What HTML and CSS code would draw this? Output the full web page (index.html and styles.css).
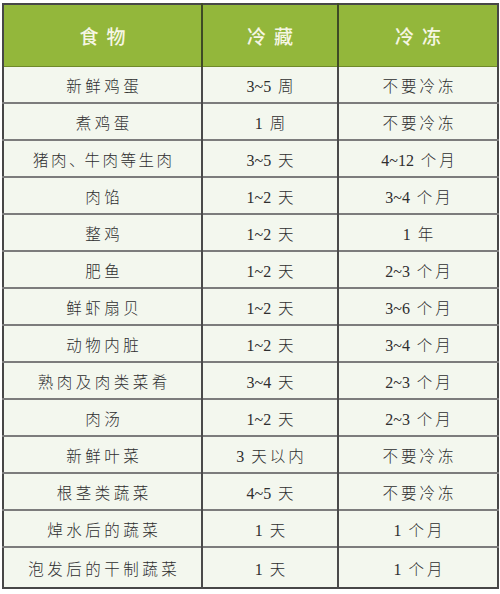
FILE: index.html
```html
<!DOCTYPE html>
<html lang="zh">
<head>
<meta charset="utf-8">
<link rel="stylesheet" href="styles.css">
</head>
<body>
<table class="food-table">
  <colgroup>
    <col class="c1"><col class="c2"><col class="c3">
  </colgroup>
  <thead>
    <tr><th>食物</th><th>冷藏</th><th>冷冻</th></tr>
  </thead>
  <tbody>
    <tr><td>新鲜鸡蛋</td><td><span class="n">3~5</span> 周</td><td>不要冷冻</td></tr>
    <tr><td>煮鸡蛋</td><td><span class="n">1</span> 周</td><td>不要冷冻</td></tr>
    <tr><td class="tight">猪肉<span class="dun">、</span>牛肉等生肉</td><td><span class="n">3~5</span> 天</td><td><span class="n">4~12</span> 个月</td></tr>
    <tr><td>肉馅</td><td><span class="n">1~2</span> 天</td><td><span class="n">3~4</span> 个月</td></tr>
    <tr><td>整鸡</td><td><span class="n">1~2</span> 天</td><td><span class="n">1</span> 年</td></tr>
    <tr><td>肥鱼</td><td><span class="n">1~2</span> 天</td><td><span class="n">2~3</span> 个月</td></tr>
    <tr><td>鲜虾扇贝</td><td><span class="n">1~2</span> 天</td><td><span class="n">3~6</span> 个月</td></tr>
    <tr><td>动物内脏</td><td><span class="n">1~2</span> 天</td><td><span class="n">3~4</span> 个月</td></tr>
    <tr><td>熟肉及肉类菜肴</td><td><span class="n">3~4</span> 天</td><td><span class="n">2~3</span> 个月</td></tr>
    <tr><td>肉汤</td><td><span class="n">1~2</span> 天</td><td><span class="n">2~3</span> 个月</td></tr>
    <tr><td>新鲜叶菜</td><td><span class="n">3</span> 天以内</td><td>不要冷冻</td></tr>
    <tr><td>根茎类蔬菜</td><td><span class="n">4~5</span> 天</td><td>不要冷冻</td></tr>
    <tr><td>焯水后的蔬菜</td><td><span class="n">1</span> 天</td><td><span class="n">1</span> 个月</td></tr>
    <tr class="last"><td>泡发后的干制蔬菜</td><td><span class="n">1</span> 天</td><td><span class="n">1</span> 个月</td></tr>
  </tbody>
</table>
</body>
</html>
```

FILE: styles.css
```css
html, body {
  margin: 0;
  padding: 0;
  background: #ffffff;
}

.food-table {
  margin: 3px 0 0 2px;
  width: 495px;
  border-collapse: collapse;
  table-layout: fixed;
  border: 2px solid #474747;
  background: #f3f7ee;
  font-family: "Liberation Serif", "Noto Sans CJK SC", serif;
}

.c1 { width: 199px; }
.c2 { width: 136px; }
.c3 { width: 160px; }

.food-table th {
  height: 61px;
  padding: 0;
  background: #93b73b;
  color: #f6f6e4;
  font-family: "Noto Sans CJK SC", sans-serif;
  font-size: 19px;
  font-weight: 500;
  letter-spacing: 8px;
  text-indent: 8px;
  text-align: center;
  vertical-align: middle;
  border-left: 2px solid #3f4a25;
  border-bottom: 1px solid #6f8a2a;
}

.food-table th:first-child { border-left: none; }

.food-table td {
  height: 35px;
  padding: 0;
  text-align: center;
  vertical-align: middle;
  color: #2e2e2e;
  font-size: 15.5px;
  font-weight: 300;
  letter-spacing: 3px;
  text-indent: 3px;
  border-top: 2px solid #7c7c7c;
  border-left: 2px solid #4a4a4a;
}

.food-table td:first-child {
  border-left: none;
  letter-spacing: 3.5px;
  text-indent: 3.5px;
}

.food-table td.tight {
  letter-spacing: 2.5px;
  text-indent: 2.5px;
}

.food-table td .n {
  letter-spacing: 0;
  font-weight: 400;
  font-size: 16px;
}

.food-table td .dun {
  letter-spacing: 0;
}

.food-table tbody tr:first-child td { border-top: none; }

.food-table tr.last td {
  height: 39px;
}
```
